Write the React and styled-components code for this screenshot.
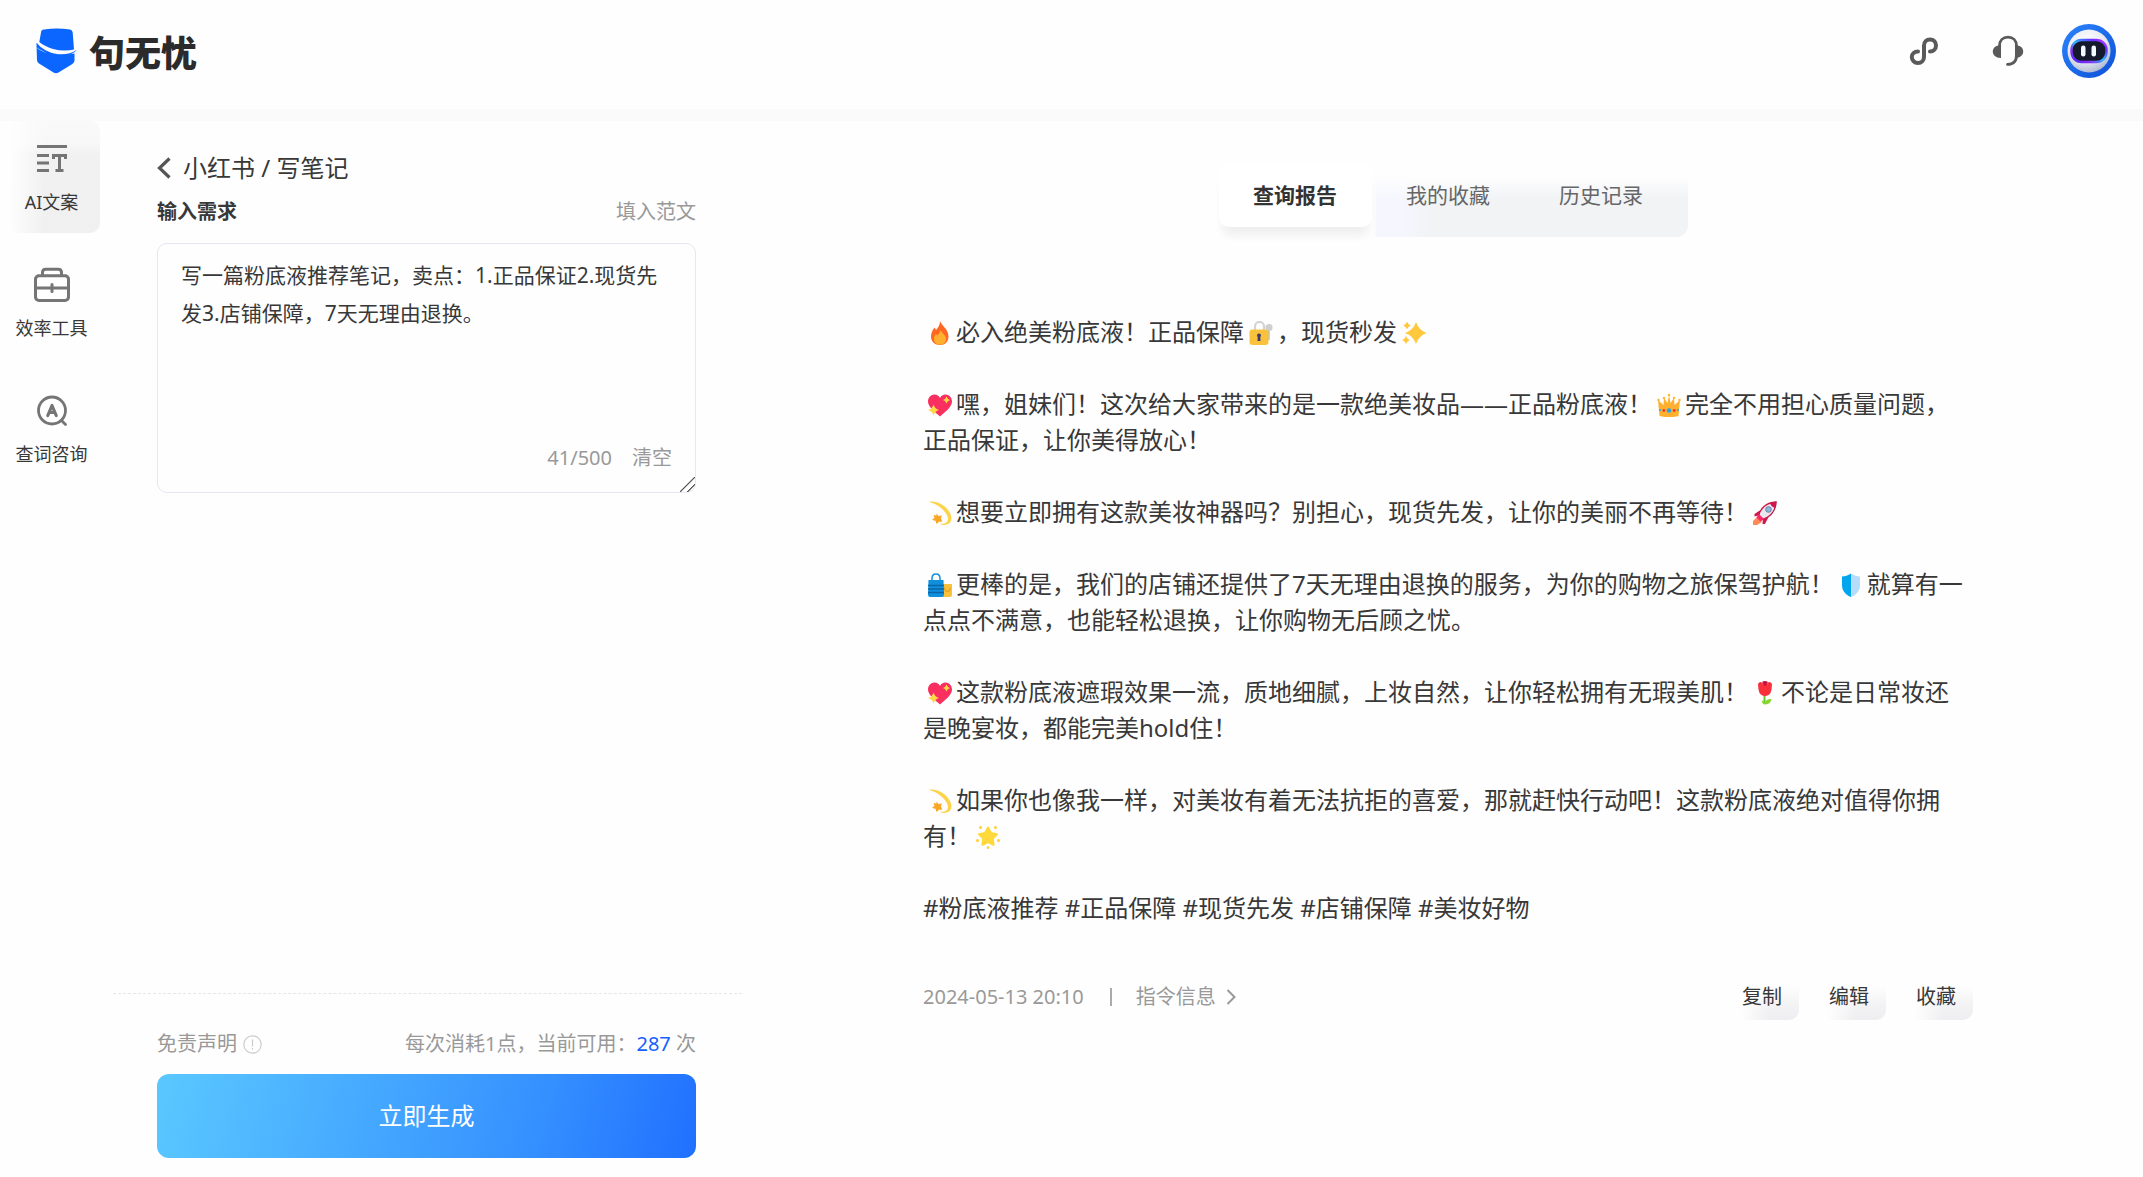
import React, { useState } from "react";
import styled, { createGlobalStyle } from "styled-components";

const Global = createGlobalStyle`
  *, *::before, *::after { box-sizing: border-box; }
  body {
    margin: 0;
    background: #fefefe;
    color: #383838;
    font-family: "Noto Sans", "Noto Sans CJK SC", sans-serif;
    font-size: 20px;
    line-height: 28px;
    text-spacing-trim: space-all;
  }
  button, textarea { font: inherit; color: inherit; }
  button { padding: 0; border: 0; background: none; cursor: pointer; }
  a { color: inherit; text-decoration: none; }
  svg { display: block; flex: none; }
`;

const Page = styled.div`
  display: flex;
  flex-direction: column;
  min-height: 100vh;
`;

/* ---------- header ---------- */

const Header = styled.header`
  display: flex;
  align-items: center;
  justify-content: space-between;
  height: 121px;
  padding: 0 27px 8px 36px;
  border-bottom: 12px solid #fafafa;
`;

const Brand = styled.a`
  display: flex;
  align-items: center;
  gap: 11px;
  font-family: "Noto Sans CJK SC", sans-serif;
  font-size: 36px;
  font-weight: 900;
  line-height: 40px;
  color: #2b2b2b;
`;

const HeaderTools = styled.div`
  display: flex;
  align-items: center;
`;

const ToolButton = styled.button`
  display: grid;
  place-items: center;
  width: 84px;
  height: 54px;
`;

const AvatarButton = styled.button`
  display: grid;
  place-items: center;
  margin-left: 12px;
  border-radius: 50%;
`;

/* ---------- frame ---------- */

const Body = styled.div`
  flex: 1;
  display: grid;
  grid-template-columns: 111px 633px minmax(0, 1fr);
`;

const Sidebar = styled.nav`
  display: flex;
  flex-direction: column;
  gap: 14px;
  padding: 0 11px 0 9px;
`;

const NavItem = styled.a`
  display: flex;
  flex-direction: column;
  align-items: center;
  gap: 13px;
  height: 112px;
  padding: 20px 6px 0 0;
  border-radius: 10px;
  font-size: 18px;
  line-height: 24px;
  white-space: nowrap;
  background: ${(p) =>
    p.$active
      ? "linear-gradient(90deg, #fefefe 0, rgba(254,254,254,0) 36px), linear-gradient(180deg, #f9f9f9 0, #f8f8f8 22px, #f1f1f1 34px, #f0f0f0 100%)"
      : "none"};

  svg { height: 36px; }
`;

/* ---------- request form ---------- */

const FormPanel = styled.form`
  display: flex;
  flex-direction: column;
  justify-content: space-between;
`;

const FormTop = styled.div`
  padding: 31px 48px 0 46px;
`;

const Breadcrumb = styled.a`
  display: flex;
  align-items: center;
  gap: 12px;
  font-size: 24px;
  line-height: 32px;
`;

const SpreadRow = styled.div`
  display: flex;
  align-items: center;
  justify-content: space-between;
`;

const FieldHead = styled(SpreadRow)`
  margin: 14px 0 17px;
`;

const FieldLabel = styled.label`
  font-weight: 700;
`;

const MutedButton = styled.button`
  color: #999;
`;

const Field = styled.div`
  position: relative;
`;

const TextBox = styled.textarea`
  display: block;
  width: 100%;
  height: 250px;
  padding: 12px 23px;
  border: 1px solid #e6e7f3;
  border-radius: 10px;
  background: #fefefe;
  font-size: 21px;
  line-height: 38px;
  resize: vertical;
  outline: none;

  &::-webkit-resizer {
    background: linear-gradient(
      135deg,
      transparent 46%,
      #555 48%,
      #555 52%,
      transparent 54%,
      transparent 70%,
      #555 72%,
      #555 76%,
      transparent 78%
    );
  }
`;

const FieldTools = styled.div`
  position: absolute;
  right: 24px;
  bottom: 21px;
  display: flex;
  gap: 20px;
  color: #999;
`;

const FormBottom = styled.div`
  margin: 0 2px;
  padding: 36px 46px 19px 44px;
  border-top: 1px dashed #e6e6e6;
`;

const Notice = styled(SpreadRow)`
  color: #999;

  button { display: flex; align-items: center; gap: 6px; }
  b { font-weight: 400; color: #1660ff; }
`;

const SubmitButton = styled.button`
  width: 100%;
  height: 84px;
  margin-top: 16px;
  border-radius: 12px;
  background: linear-gradient(105deg, #5ac8ff 0%, #45a8ff 40%, #3590ff 70%, #2070ff 100%);
  color: #fff;
  font-size: 24px;
`;

/* ---------- report ---------- */

const Report = styled.main`
  display: flex;
  flex-direction: column;
  align-items: center;
  padding: 32px 0 40px 9px;
`;

const Tabs = styled.div`
  display: flex;
  padding: 10px;
  border-radius: 12px;
  background:
    linear-gradient(180deg, #fefefe 0, #fefefe 23px, rgba(254, 254, 254, 0) 46px),
    linear-gradient(90deg, #fefefe 0, #fefefe 164px, #f6f7fe 168px, #f6f7fe 192px, #f1f3f5 224px);
`;

const Tab = styled.button`
  width: 153px;
  height: 64px;
  border-radius: 10px;
  font-size: 21px;
  font-weight: ${(p) => (p.$active ? 700 : 400)};
  color: ${(p) => (p.$active ? "#333" : "#666")};
  background: ${(p) => (p.$active ? "#fff" : "none")};
  box-shadow: ${(p) => (p.$active ? "0 12px 10px -4px rgba(40, 30, 30, 0.07)" : "none")};
`;

const Article = styled.article`
  width: 100%;
  max-width: 1050px;
  margin-top: 77px;
  padding-right: 8px;
  font-size: 24px;
  line-height: 36px;

  p { margin: 0 0 36px; }
  p:last-child { margin: 0; }
`;

const EmojiIcon = styled.svg`
  && { display: inline-block; }
  width: 24px;
  height: 24px;
  margin: 0 4px 0 5px;
  vertical-align: -4px;
`;

const ReportFoot = styled(SpreadRow)`
  width: 100%;
  max-width: 1050px;
  margin-top: 48px;
`;

const Meta = styled.div`
  display: flex;
  align-items: center;
  color: #999;
`;

const Divider = styled.span`
  width: 2px;
  height: 18px;
  margin: 0 24px 0 26px;
  background: #aaa;
`;

const MetaLink = styled.a`
  display: flex;
  align-items: center;
  gap: 10px;
`;

const Actions = styled.div`
  display: flex;
  gap: 13px;
`;

const ActionButton = styled.button`
  width: 74px;
  height: 46px;
  border-radius: 10px;
  background:
    linear-gradient(90deg, #fefefe 0, #fefefe 16px, rgba(254, 254, 254, 0) 44px),
    linear-gradient(180deg, #fefefe 0, #fefefe 12px, #f3f3f5 30px, #eeeef0 100%);
`;

/* ---------- drawings ---------- */

const LogoMark = () => (
  <svg width="42" height="46" viewBox="0 0 42 46" fill="#0a66ff">
    <path d="M5 4.500Q5 2 8 1.600Q21-.4 34 1.600Q36.500 2 36.700 4.500L38 21.500Q28 23.800 17 21Q8 18 3.300 14Z" />
    <path d="M.4 14.500Q1 19 1.500 20.500Q8 25 18 26.600Q29 27.800 38.500 25.600V33Q38 35 36 36.200L22.500 44.500Q20 46 17.500 44.500L3 35.500Q1 34.500 1 32Z" />
    <path d="M.4 14.500Q8 24.500 22 26.200Q33 27.200 41 21.700Q37 26.300 30 27.500L14 27L1.200 20Z" />
  </svg>
);

const MiniAppIcon = () => (
  <svg width="30" height="30" viewBox="0 0 30 30" fill="none" stroke="#5a5a5a" strokeWidth="4" strokeLinecap="round">
    <path d="M21 15.500C24.300 15.500 27 13 27 9.500C27 6.200 24.500 3.500 21 3.500C17.500 3.500 15 6 15 9.500V21C15 24.500 12.300 27 9 27C5.500 27 2.800 24.300 2.800 21C2.800 17.500 5.500 15.500 9 15.500" />
  </svg>
);

const HeadsetIcon = () => (
  <svg width="32" height="32" viewBox="0 0 32 32">
    <path d="M7.500 13V11C7.500 5.500 11 2.200 16 2.200S24.500 5.500 24.500 11V20C24.500 26 21.500 29.400 15.500 29.400" fill="none" stroke="#5a5a5a" strokeWidth="2.800" strokeLinecap="round" />
    <path d="M9 10V23C3.500 22.800.8 20 .8 16.500S3.500 10.300 9 10Z" fill="#5a5a5a" />
    <path d="M23 10V23C28.500 22.800 31.200 20 31.200 16.500S28.500 10.300 23 10Z" fill="#5a5a5a" />
  </svg>
);

const Avatar = () => (
  <svg width="54" height="54" viewBox="0 0 54 54">
    <defs>
      <linearGradient id="ring" x1="0" y1="0" x2="1" y2="1">
        <stop offset="0" stopColor="#2b85fb" />
        <stop offset="1" stopColor="#0f50d8" />
      </linearGradient>
      <radialGradient id="head" cx=".42" cy=".3" r=".75">
        <stop offset="0" stopColor="#fff" />
        <stop offset=".6" stopColor="#e6e9f2" />
        <stop offset="1" stopColor="#a9b3cf" />
      </radialGradient>
      <linearGradient id="visor" x1="0" y1="1" x2="1" y2="0">
        <stop offset="0" stopColor="#3c2bff" />
        <stop offset=".25" stopColor="#8b2bf5" />
        <stop offset=".5" stopColor="#27b8ff" />
        <stop offset=".8" stopColor="#6a2bff" />
        <stop offset="1" stopColor="#c93bff" />
      </linearGradient>
    </defs>
    <circle cx="27" cy="27" r="27" fill="url(#ring)" />
    <circle cx="27" cy="27" r="21.500" fill="url(#head)" />
    <rect x="9.500" y="16" width="35" height="22" rx="10" fill="#141a2c" stroke="url(#visor)" strokeWidth="2.400" />
    <rect x="19" y="21.500" width="4.500" height="11" rx="2.200" fill="#f2fbff" />
    <rect x="29.500" y="21.500" width="4.500" height="11" rx="2.200" fill="#f2fbff" />
  </svg>
);

const CopyIcon = () => (
  <svg width="30" height="36" viewBox="0 0 30 36" fill="none" stroke="#757575" strokeWidth="3">
    <path d="M0 5.500H30M0 14.500H12M0 22H12M0 29.500H12M16.500 18V14.500H28.500V18M22.500 14.500V29.500M18.500 29.500H26.500" />
  </svg>
);

const ToolboxIcon = () => (
  <svg width="36" height="36" viewBox="0 0 36 36" fill="none" stroke="#757575" strokeWidth="3" strokeLinecap="round">
    <rect x="1.500" y="8.800" width="33" height="24.600" rx="3.500" />
    <path d="M8.500 8.500V5.500Q8.500 2.300 11.700 2.300H24.300Q27.500 2.300 27.500 5.500V8.500M1.500 21H34.500M18 17.500V24.500" />
  </svg>
);

const AskIcon = () => (
  <svg width="30" height="36" viewBox="0 0 30 36" fill="none" stroke="#757575" strokeWidth="2.800" strokeLinecap="round" strokeLinejoin="round">
    <circle cx="15" cy="17.500" r="13.500" />
    <path d="M24.500 27.500L28.500 31.500" />
    <path d="M10.800 22.500L15 12.500L19.200 22.500M12.500 19.500H17.500" strokeWidth="3.200" />
  </svg>
);

const BackIcon = () => (
  <svg width="14" height="22" viewBox="0 0 14 22" fill="none" stroke="#555" strokeWidth="3.200">
    <path d="M12.500 1.500L2.500 11L12.500 20.500" />
  </svg>
);

const ForwardIcon = () => (
  <svg width="10" height="16" viewBox="0 0 10 16" fill="none" stroke="#999" strokeWidth="2">
    <path d="M1.500 1L8.500 8L1.500 15" />
  </svg>
);

const InfoIcon = () => (
  <svg width="19" height="19" viewBox="0 0 19 19" fill="none" stroke="#ccc" strokeWidth="1.200">
    <circle cx="9.500" cy="9.500" r="8.700" />
    <path d="M9.500 4.500V11.500M9.500 13V14.500" />
  </svg>
);

const STAR4 = (x, y, r, fill = "#ffc83d") => (
  <path
    fill={fill}
    d={`M${x} ${y - r}Q${x + r * 0.25} ${y - r * 0.25} ${x + r} ${y}Q${x + r * 0.25} ${y + r * 0.25} ${x} ${y + r}Q${x - r * 0.25} ${y + r * 0.25} ${x - r} ${y}Q${x - r * 0.25} ${y - r * 0.25} ${x} ${y - r}Z`}
  />
);

const EMOJI = {
  fire: (
    <>
      <path fill="#ff6723" d="M12 0C13 4 20.500 8 20.500 15.500C20.500 20.500 17 24 12 24S3 20.500 3 15.500C3 11.500 5 8.500 6.500 6.500L8 9C10 7 12 4 12 0Z" />
      <path fill="#ffb02e" d="M12.500 9C13 12 18 13.500 18 18C18 21.500 15.500 23.500 12 23.500S6 21.500 6 18C6 15.500 7 14 8 13L9.500 14.500C11 13 12 11 12.500 9Z" />
    </>
  ),
  lock: (
    <>
      <path d="M6 9V5.500A4.500 4.500 0 0 1 15 5.500V9" fill="none" stroke="#d3d3d3" strokeWidth="2.200" />
      <path d="M19.500 7V19" stroke="#bfbfbf" strokeWidth="2.500" />
      <circle cx="20" cy="6.500" r="3.600" fill="#cfcfcf" />
      <rect x=".5" y="8.500" width="19" height="15.500" rx="3" fill="#f9c23c" />
      <path fill="#433b6b" d="M10 12.500A2 2 0 0 1 11.300 16L11.500 20H8.500L8.700 16A2 2 0 0 1 10 12.500Z" />
    </>
  ),
  sparkles: (
    <>
      {STAR4(14, 12, 11)}
      {STAR4(5, 4.500, 3.800)}
      {STAR4(4, 19, 4)}
      <circle cx="14" cy="12" r="4.500" fill="#ffc83d" />
    </>
  ),
  heart: (
    <>
      <path fill="#f92f60" d="M6.500 1.500C9 1.500 11 3 12 5C13 3 15 1.500 17.500 1.500C21 1.500 24 4.500 24 8.500C24 14 17 19 12 23.500C7 19 0 14 0 8.500C0 4.500 3 1.500 6.500 1.500Z" />
      {STAR4(18.5, 7, 3.500, "#ffd84a")}
      {STAR4(5.500, 17, 5.500, "#ffd84a")}
    </>
  ),
  dizzy: (
    <>
      <path fill="#fcd34a" d="M0 1C7-1 17 3 22 12C24.500 17 24 22 18.500 23.500C16 24.500 13 24 11.500 22.500C16 23.500 20 22 20 18C20 12 10 2 0 1Z" />
      <path fill="#f9a825" d="M8.500 12.500L10.500 15L14 14.500L12.800 17.500L14.500 20.500L11 20.800L8.500 23L7.500 19.800L4 19L6.500 16.800L5.500 14L8.500 14.500Z" />
    </>
  ),
  bags: (
    <>
      <path fill="#f9c23c" d="M13 11H24V22Q24 24 22 24H13Z" />
      <path d="M16.500 14.500Q17 18.500 19.500 18.500T22 14.500" fill="none" stroke="#e39d2b" strokeWidth="1.200" />
      <path d="M4 8V5.500Q4 1 8 1T12 5.500V8" fill="none" stroke="#1490d8" strokeWidth="1.500" />
      <path fill="#0f8fdc" d="M.5 7H15.500L16 21.500Q16 24 14 24H2Q0 24 0 21.500Z" />
      <path d="M0 12.500H16M0 16H16M0 19.500H16" stroke="#0a65a6" strokeWidth="1.300" />
    </>
  ),
  crown: (
    <>
      <path fill="#ffb02e" d="M2.500 23L1 7L6.500 12L7 5L10.500 10L12 2L13.500 10L17 5L17.500 12L23 7L21.500 23Q12 25.500 2.500 23Z" />
      <g fill="#ffb93f">
        <circle cx="1.500" cy="7" r="1.300" />
        <circle cx="7" cy="5" r="1.300" />
        <circle cx="12" cy="2" r="1.300" />
        <circle cx="17" cy="5" r="1.300" />
        <circle cx="22.500" cy="7" r="1.300" />
      </g>
      <circle cx="12" cy="17.500" r="2.300" fill="#26a6e0" />
      <circle cx="6.800" cy="17.500" r="1.400" fill="#f8312f" />
      <circle cx="17.200" cy="17.500" r="1.400" fill="#f8312f" />
      <circle cx="3" cy="17" r="1" fill="#26a6e0" />
      <circle cx="21" cy="17" r="1" fill="#26a6e0" />
    </>
  ),
  rocket: (
    <>
      <path fill="#ff8a57" d="M4 16L9 21L4 24H0V20Z" />
      <path fill="#d1174f" d="M9 8L1.500 13V15.500L7.500 14ZM16 15L12 23H9.500L10 17Z" />
      <path fill="#e9e6ee" stroke="#c9184a" strokeWidth="1.300" d="M5.500 15C7 8 13 1.500 23 1C23 10.500 16 17 9 18.500Z" />
      <path fill="#d1174f" d="M17 2Q20 1 23.500.5Q23.500 4 22.300 7Q18 6 17 2Z" />
      <path fill="#f8296a" d="M3.500 16.500L6 13L11 18L7.500 20.500Z" />
      <circle cx="15.500" cy="8.500" r="2.800" fill="#8ab9e6" stroke="#6f7f99" strokeWidth="1" />
    </>
  ),
  shield: (
    <>
      <path fill="#00a6ed" d="M12 .5C9 2.500 6 3.500 3 3.500V12C3 18 7 22 12 24Z" />
      <path fill="#b5dcfb" d="M12 .5C15 2.500 18 3.500 21 3.500V12C21 18 17 22 12 24Z" />
    </>
  ),
  tulip: (
    <>
      <path d="M11.500 13V23" stroke="#6bc42b" strokeWidth="2" />
      <path fill="#86d72f" d="M11 23.500Q9 22.500 8.500 19.500Q10.500 19.500 11.500 21.500Q13.500 17.500 18.500 18Q18 23.500 11 23.500Z" />
      <path fill="#f92f3c" d="M5 3Q7-.5 9.500 2.500L12 .5L14.500 2.500Q16.500-.5 19 3Q19 8 17.500 12Q15.500 15 12 15T6.500 12Q5 8 5 3Z" />
      <path fill="#c4123f" d="M9 1Q12-1 15 1L12 5.500Z" />
    </>
  ),
  star: (
    <>
      <path fill="#ffd93b" stroke="#ffd93b" strokeWidth="2" strokeLinejoin="round" d="M12 2.500L15 8L21 9.200L16.800 13.600L17.600 19.800L12 17.200L6.400 19.800L7.200 13.600L3 9.200L9 8Z" />
      <g fill="#ffcf33">
        <circle cx="4.500" cy="2.500" r="1.500" />
        <circle cx="19.500" cy="2.500" r="1.500" />
        <circle cx="1.500" cy="15.500" r="1.500" />
        <circle cx="22.500" cy="15.500" r="1.500" />
        <ellipse cx="12" cy="22.500" rx="1.200" ry="1.500" />
      </g>
    </>
  ),
};

const Emoji = ({ name }) => (
  <EmojiIcon viewBox="0 0 24 24" aria-hidden="true">
    {EMOJI[name]}
  </EmojiIcon>
);

/* ---------- content ---------- */

const NAV = [
  { label: "AI文案", Icon: CopyIcon },
  { label: "效率工具", Icon: ToolboxIcon },
  { label: "查词咨询", Icon: AskIcon },
];

const TABS = ["查询报告", "我的收藏", "历史记录"];

const ACTIONS = ["复制", "编辑", "收藏"];

const NOTE = [
  "{fire}必入绝美粉底液！正品保障{lock}，现货秒发{sparkles}",
  "{heart}嘿，姐妹们！这次给大家带来的是一款绝美妆品——正品粉底液！{crown}完全不用担心质量问题，正品保证，让你美得放心！",
  "{dizzy}想要立即拥有这款美妆神器吗？别担心，现货先发，让你的美丽不再等待！{rocket}",
  "{bags}更棒的是，我们的店铺还提供了7天无理由退换的服务，为你的购物之旅保驾护航！{shield}就算有一点点不满意，也能轻松退换，让你购物无后顾之忧。",
  "{heart}这款粉底液遮瑕效果一流，质地细腻，上妆自然，让你轻松拥有无瑕美肌！{tulip}不论是日常妆还是晚宴妆，都能完美hold住！",
  "{dizzy}如果你也像我一样，对美妆有着无法抗拒的喜爱，那就赶快行动吧！这款粉底液绝对值得你拥有！{star}",
  "#粉底液推荐 #正品保障 #现货先发 #店铺保障 #美妆好物",
];

const renderNote = (text) =>
  text
    .split(/\{(\w+)\}/)
    .map((part, i) => (i % 2 ? <Emoji key={i} name={part} /> : part));

export default function App() {
  const [tab, setTab] = useState(0);
  const [request, setRequest] = useState(
    "写一篇粉底液推荐笔记，卖点：1.正品保证2.现货先发3.店铺保障，7天无理由退换。"
  );

  return (
    <Page lang="zh-CN">
      <Global />
      <Header>
        <Brand href="#">
          <LogoMark />
          句无忧
        </Brand>
        <HeaderTools>
          <ToolButton type="button"><MiniAppIcon /></ToolButton>
          <ToolButton type="button"><HeadsetIcon /></ToolButton>
          <AvatarButton type="button"><Avatar /></AvatarButton>
        </HeaderTools>
      </Header>

      <Body>
        <Sidebar>
          {NAV.map(({ label, Icon }, i) => (
            <NavItem key={label} href="#" $active={i === 0}>
              <Icon />
              {label}
            </NavItem>
          ))}
        </Sidebar>

        <FormPanel onSubmit={(e) => e.preventDefault()}>
          <FormTop>
            <Breadcrumb href="#">
              <BackIcon />
              小红书 / 写笔记
            </Breadcrumb>
            <FieldHead>
              <FieldLabel htmlFor="request">输入需求</FieldLabel>
              <MutedButton type="button">填入范文</MutedButton>
            </FieldHead>
            <Field>
              <TextBox
                id="request"
                maxLength={500}
                spellCheck={false}
                value={request}
                onChange={(e) => setRequest(e.target.value)}
              />
              <FieldTools>
                <span>{`${request.length}/500`}</span>
                <MutedButton type="button" onClick={() => setRequest("")}>清空</MutedButton>
              </FieldTools>
            </Field>
          </FormTop>
          <FormBottom>
            <Notice>
              <MutedButton type="button">
                免责声明
                <InfoIcon />
              </MutedButton>
              <span>每次消耗1点，当前可用：<b>287</b> 次</span>
            </Notice>
            <SubmitButton type="submit">立即生成</SubmitButton>
          </FormBottom>
        </FormPanel>

        <Report>
          <Tabs role="tablist">
            {TABS.map((name, i) => (
              <Tab
                key={name}
                type="button"
                role="tab"
                aria-selected={i === tab}
                $active={i === tab}
                onClick={() => setTab(i)}
              >
                {name}
              </Tab>
            ))}
          </Tabs>
          <Article>
            {NOTE.map((text) => (
              <p key={text}>{renderNote(text)}</p>
            ))}
          </Article>
          <ReportFoot>
            <Meta>
              <time dateTime="2024-05-13T20:10">2024-05-13 20:10</time>
              <Divider />
              <MetaLink href="#">
                指令信息
                <ForwardIcon />
              </MetaLink>
            </Meta>
            <Actions>
              {ACTIONS.map((name) => (
                <ActionButton key={name} type="button">{name}</ActionButton>
              ))}
            </Actions>
          </ReportFoot>
        </Report>
      </Body>
    </Page>
  );
}
